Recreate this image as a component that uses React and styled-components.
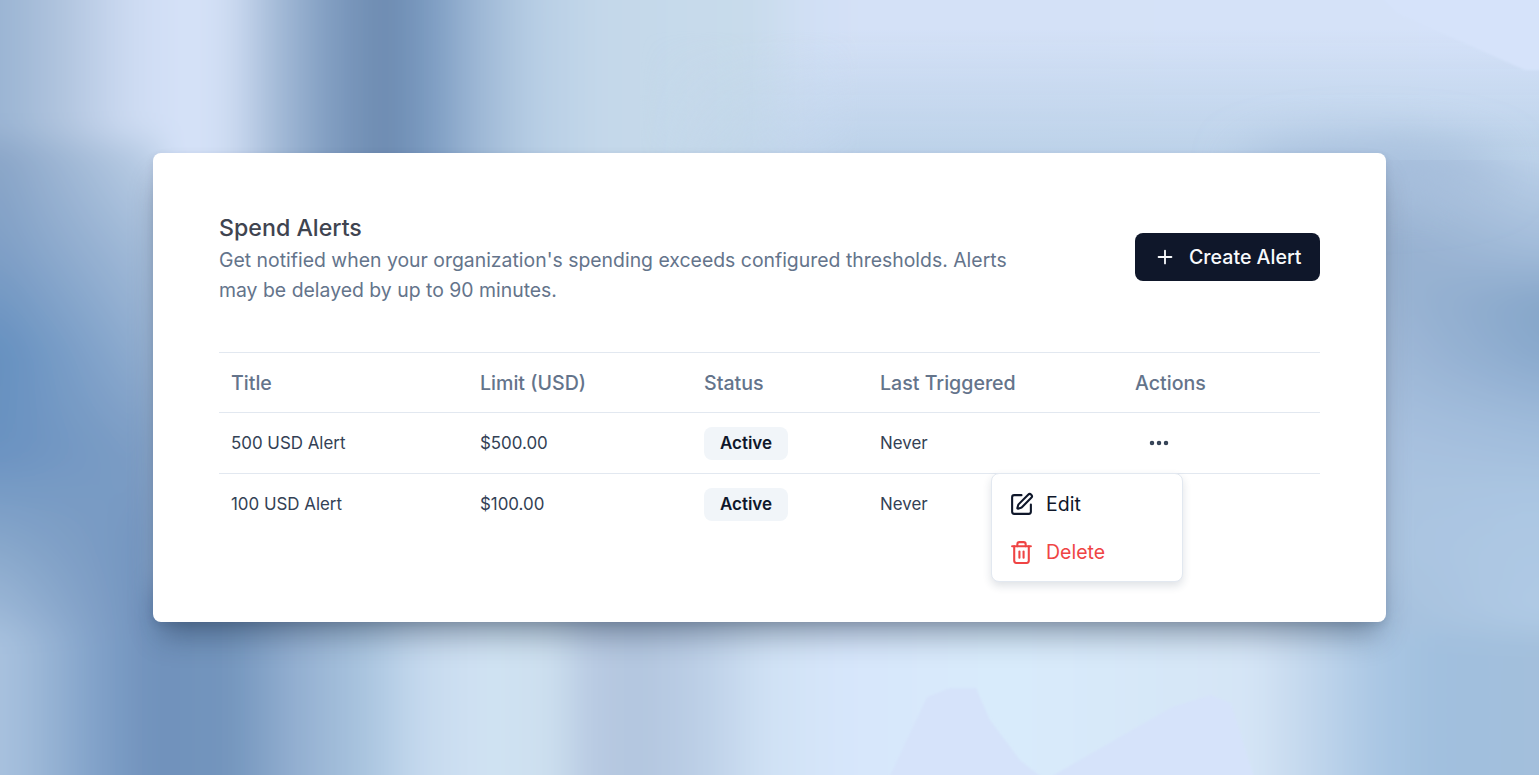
import React from 'react';
import styled, { createGlobalStyle } from 'styled-components';
import { Plus, Ellipsis, SquarePen, Trash2 } from 'lucide-react';

const GlobalStyle = createGlobalStyle`
  html, body { margin: 0; padding: 0; height: 100%; }
  body { font-family: Inter, "Liberation Sans", sans-serif; overflow: hidden; }
`;

const Page = styled.div`
  position: relative;
  width: 1539px;
  height: 775px;
  padding-top: 153px;
  box-sizing: border-box;
  overflow: hidden;
  background: #c4d6ec;
`;

const Backdrop = styled.svg`
  position: absolute;
  inset: 0;
  width: 100%;
  height: 100%;
`;

const Card = styled.section`
  position: relative;
  width: 1233px;
  height: 469px;
  margin-left: 153px;
  padding: 60px 66px 0;
  box-sizing: border-box;
  background: #fff;
  border-radius: 8px;
  box-shadow: 0 20px 28px -8px rgba(20, 35, 60, 0.42), 0 3px 8px rgba(20, 35, 60, 0.11);
`;

const Header = styled.header`
  display: flex;
  justify-content: space-between;
  align-items: flex-start;
  height: 94px;
`;

const Intro = styled.div`
  width: 810px;
`;

const Title = styled.h1`
  margin: 0 0 2px;
  font-size: 23.2px;
  line-height: 30px;
  font-weight: 500;
  color: #3f4450;
`;

const Description = styled.p`
  margin: 0;
  font-size: 19.42px;
  line-height: 30px;
  color: #64748b;
`;

const PrimaryButton = styled.button`
  display: flex;
  align-items: center;
  gap: 13px;
  width: 185px;
  height: 48px;
  margin-top: 20px;
  padding: 0 0 0 19px;
  border: 0;
  border-radius: 8px;
  background: #0f172a;
  color: #f8fafc;
  font: 500 19.6px Inter, sans-serif;
`;

const Table = styled.div`
  margin-top: 45px;
  border-top: 1px solid #e2e8f0;
`;

const Row = styled.div`
  display: grid;
  grid-template-columns: 249px 224px 176px 255px 197px;
  align-items: center;
  height: ${p => (p.$head ? '59px' : '60px')};
  border-bottom: ${p => (p.$last ? '0' : '1px solid #e2e8f0')};
`;

const HeadCell = styled.div`
  padding-left: 12px;
  font-size: 19.6px;
  font-weight: 500;
  color: #64748b;
`;

const Cell = styled.div`
  padding-left: 12px;
  font-size: 16.9px;
  color: #334155;
`;

const Badge = styled.span`
  display: inline-flex;
  align-items: center;
  justify-content: center;
  width: 84px;
  height: 33px;
  border-radius: 8px;
  background: #f1f5f9;
  color: #0f172a;
  font-size: 17px;
  font-weight: 600;
`;

const DotsButton = styled.button`
  display: flex;
  align-items: center;
  justify-content: center;
  width: 48px;
  height: 33px;
  padding: 0;
  border: 0;
  background: transparent;
  color: #334155;
`;

const Menu = styled.div`
  position: absolute;
  left: 838px;
  top: 320px;
  width: 192px;
  height: 109px;
  padding: 6px 0;
  box-sizing: border-box;
  background: #fff;
  border: 1px solid #e2e8f0;
  border-radius: 8px;
  box-shadow: 0 4px 8px rgba(30, 50, 80, 0.14);
`;

const MenuItem = styled.div`
  display: flex;
  align-items: center;
  gap: 12px;
  height: 48px;
  padding-left: 17px;
  font-size: 19.5px;
  color: ${p => (p.$danger ? '#ef4444' : '#0f172a')};
`;

const rows = [
  { title: '500 USD Alert', limit: '$500.00' },
  { title: '100 USD Alert', limit: '$100.00' },
];

// stops are [offset, colour]; colours read off the reference around the card
const grads = {
  top: [[0, '#9ab4d3'], [0.04, '#b0c4de'], [0.085, '#cddbf2'], [0.125, '#d6e3f9'], [0.15, '#cedcf2'], [0.175, '#a9bfdb'], [0.215, '#7f9cc0'], [0.25, '#6c8ab0'], [0.28, '#7c9cc2'], [0.31, '#9db7d5'], [0.345, '#b6cde4'], [0.39, '#c4d8ea'], [0.49, '#c8dbeb'], [0.515, '#cfdff3'], [0.555, '#d4e1f7'], [1, '#d5e2f9']],
  bottom: [[0, '#a9c2df'], [0.026, '#9ab6d6'], [0.065, '#7fa0c8'], [0.1, '#7091bb'], [0.15, '#7395bd'], [0.19, '#92aed0'], [0.24, '#abc6e0'], [0.273, '#c5d9ee'], [0.312, '#d0e2f3'], [0.357, '#cde0ef'], [0.383, '#b8cae2'], [0.416, '#b3c6df'], [0.455, '#bccfe6'], [0.5, '#d0e2f5'], [0.552, '#d7e6fb'], [0.65, '#d9ebfb'], [0.812, '#d5e5f6'], [0.845, '#c5d9ee'], [0.897, '#a9c6e3'], [0.936, '#a0bfde'], [1, '#a3bfdc']],
  left0: [[0, '#8ba6c8'], [0.2, '#7f9fc6'], [0.41, '#6590c0'], [0.61, '#6a92c1'], [0.82, '#8aa9cc'], [1, '#a4bedc']],
  left1: [[0, '#bdd0e7'], [0.2, '#a4bcd9'], [0.41, '#92aed0'], [0.61, '#7e9ec5'], [0.82, '#7294bf'], [1, '#6f90bb']],
  right0: [[0, '#a9c0dc'], [0.2, '#96b0d0'], [0.41, '#a0b9d8'], [0.61, '#a9c2e0'], [0.82, '#abc5e1'], [1, '#a4bfdd']],
  right1: [[0, '#bdd2e9'], [0.2, '#a3bcda'], [0.31, '#86a6c9'], [0.41, '#88a8cc'], [0.55, '#9db9d9'], [0.71, '#abc6e2'], [1, '#b1cbe5']],
};

const Stops = ({ list }) => list.map(([o, c]) => <stop key={o} offset={o} stopColor={c} />);

function BackdropArt() {
  return (
    <Backdrop viewBox="0 0 1539 775" preserveAspectRatio="none">
      <defs>
        <linearGradient id="gTop" gradientUnits="userSpaceOnUse" x1="0" x2="1539" y1="0" y2="0"><Stops list={grads.top} /></linearGradient>
        <linearGradient id="gBottom" gradientUnits="userSpaceOnUse" x1="0" x2="1539" y1="0" y2="0"><Stops list={grads.bottom} /></linearGradient>
        <linearGradient id="gLeft0" gradientUnits="userSpaceOnUse" x1="0" x2="0" y1="150" y2="640"><Stops list={grads.left0} /></linearGradient>
        <linearGradient id="gLeft1" gradientUnits="userSpaceOnUse" x1="0" x2="0" y1="150" y2="640"><Stops list={grads.left1} /></linearGradient>
        <linearGradient id="gRight0" gradientUnits="userSpaceOnUse" x1="0" x2="0" y1="150" y2="640"><Stops list={grads.right0} /></linearGradient>
        <linearGradient id="gRight1" gradientUnits="userSpaceOnUse" x1="0" x2="0" y1="150" y2="640"><Stops list={grads.right1} /></linearGradient>
        <linearGradient id="fadeL" gradientUnits="userSpaceOnUse" x1="0" x2="150" y1="0" y2="0">
          <stop offset="0" stopColor="#000" /><stop offset="1" stopColor="#fff" />
        </linearGradient>
        <linearGradient id="fadeR" gradientUnits="userSpaceOnUse" x1="1386" x2="1539" y1="0" y2="0">
          <stop offset="0" stopColor="#000" /><stop offset="1" stopColor="#fff" />
        </linearGradient>
        <linearGradient id="fadeSky" gradientUnits="userSpaceOnUse" x1="640" x2="860" y1="0" y2="0">
          <stop offset="0" stopColor="#000" /><stop offset="1" stopColor="#fff" />
        </linearGradient>
        <linearGradient id="skyFade" gradientUnits="userSpaceOnUse" x1="0" x2="0" y1="30" y2="160">
          <stop offset="0" stopColor="#bcd2e8" stopOpacity="0" /><stop offset="1" stopColor="#bbd1e8" />
        </linearGradient>
        <mask id="maskL" maskUnits="userSpaceOnUse" x="-60" y="0" width="300" height="775"><rect x="-60" width="300" height="775" fill="url(#fadeL)" /></mask>
        <mask id="maskR" maskUnits="userSpaceOnUse" x="1300" y="0" width="300" height="775"><rect x="1300" width="300" height="775" fill="url(#fadeR)" /></mask>
        <mask id="maskSky" maskUnits="userSpaceOnUse" x="600" y="0" width="1000" height="200"><rect x="600" width="1000" height="200" fill="url(#fadeSky)" /></mask>
        <filter id="soft" filterUnits="userSpaceOnUse" x="-120" y="-120" width="1780" height="1015"><feGaussianBlur stdDeviation="15" /></filter>
        <filter id="glow" filterUnits="userSpaceOnUse" x="1100" y="50" width="500" height="220"><feGaussianBlur stdDeviation="24" /></filter>
        <filter id="edge"><feGaussianBlur stdDeviation="0.8" /></filter>
      </defs>
      <g filter="url(#soft)">
        <rect x="-100" y="-100" width="1740" height="300" fill="url(#gTop)" />
        <rect x="-100" y="590" width="1740" height="290" fill="url(#gBottom)" />
        <rect x="-100" y="140" width="262" height="490" fill="url(#gLeft0)" />
        <rect x="-100" y="140" width="262" height="490" fill="url(#gLeft1)" mask="url(#maskL)" />
        <rect x="1378" y="140" width="262" height="490" fill="url(#gRight0)" />
        <rect x="1378" y="140" width="262" height="490" fill="url(#gRight1)" mask="url(#maskR)" />
      </g>
      <rect x="600" y="30" width="939" height="130" fill="url(#skyFade)" mask="url(#maskSky)" />
      <ellipse cx="1370" cy="170" rx="130" ry="28" fill="#a6bedc" filter="url(#glow)" />
      <g filter="url(#edge)" fill="#d6e3fa">
        <polygon points="1380,-4 1545,-4 1545,70 1525,70 1397,13" />
        <polygon points="888,780 927,697 950,688 976,688 990,720 1020,760 1045,780" />
        <polygon points="1045,780 1172,707 1211,695 1231,703 1255,780" />
      </g>
    </Backdrop>
  );
}

export default function App() {
  return (
    <Page>
      <GlobalStyle />
      <BackdropArt />
      <Card>
        <Header>
          <Intro>
            <Title>Spend Alerts</Title>
            <Description>
              Get notified when your organization's spending exceeds configured thresholds. Alerts may be delayed by up to 90 minutes.
            </Description>
          </Intro>
          <PrimaryButton>
            <Plus size={22} strokeWidth={2} />
            Create Alert
          </PrimaryButton>
        </Header>
        <Table>
          <Row $head>
            <HeadCell>Title</HeadCell>
            <HeadCell>Limit (USD)</HeadCell>
            <HeadCell>Status</HeadCell>
            <HeadCell>Last Triggered</HeadCell>
            <HeadCell>Actions</HeadCell>
          </Row>
          {rows.map((row, i) => (
            <Row key={row.title} $last={i === rows.length - 1}>
              <Cell>{row.title}</Cell>
              <Cell>{row.limit}</Cell>
              <Cell><Badge>Active</Badge></Cell>
              <Cell>Never</Cell>
              <Cell>{i === 0 && <DotsButton><Ellipsis size={24} strokeWidth={2.5} /></DotsButton>}</Cell>
            </Row>
          ))}
        </Table>
        <Menu>
          <MenuItem><SquarePen size={25} strokeWidth={2} />Edit</MenuItem>
          <MenuItem $danger><Trash2 size={25} strokeWidth={2} />Delete</MenuItem>
        </Menu>
      </Card>
    </Page>
  );
}
